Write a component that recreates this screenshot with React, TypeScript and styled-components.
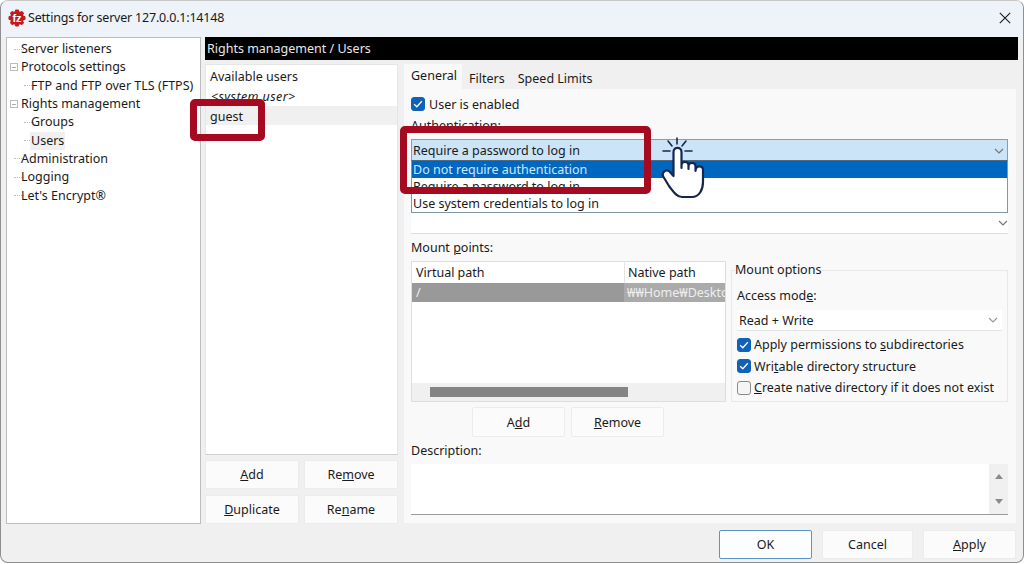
import React from "react";
import styled, { createGlobalStyle } from "styled-components";

const GlobalStyle = createGlobalStyle`
  html, body {
    margin: 0;
    padding: 0;
    background: #fff;
    overflow: hidden;
  }
  * {
    box-sizing: border-box;
  }
  u {
    text-underline-offset: 1px;
    text-decoration-thickness: 1px;
  }
`;

const treeItems = [
  { label: "Server listeners", level: 0 },
  { label: "Protocols settings", level: 0, expander: true },
  { label: "FTP and FTP over TLS (FTPS)", level: 1 },
  { label: "Rights management", level: 0, expander: true },
  { label: "Groups", level: 1 },
  { label: "Users", level: 1, selected: true },
  { label: "Administration", level: 0 },
  { label: "Logging", level: 0 },
  { label: "Let's Encrypt®", level: 0 },
];

const Chevron = ({ color = "#777" }: { color?: string }) => (
  <svg width="10" height="6" viewBox="0 0 10 6" fill="none">
    <path d="M1 1l4 4 4-4" stroke={color} strokeWidth="1.2" />
  </svg>
);

const Logo = () => (
  <svg width="18" height="18" viewBox="0 0 18 18">
    <g fill="#bf1d1d">
      <circle cx="9" cy="9" r="7" />
      <rect x="7" y="0.5" width="4" height="17" rx="1" />
      <rect x="0.5" y="7" width="17" height="4" rx="1" />
      <rect x="7" y="0.5" width="4" height="17" rx="1" transform="rotate(45 9 9)" />
      <rect x="7" y="0.5" width="4" height="17" rx="1" transform="rotate(-45 9 9)" />
    </g>
    <text x="9" y="13" textAnchor="middle" fontFamily="Liberation Sans, sans-serif" fontSize="11" fontWeight="700" fill="#fff">
      fz
    </text>
  </svg>
);

const Check = ({ on }: { on?: boolean }) => (
  <CheckBox $on={on}>
    {on && (
      <svg width="10" height="8" viewBox="0 0 10 8" fill="none">
        <path d="M1.2 4.2l2.6 2.5 5-5.4" stroke="#fff" strokeWidth="1.3" />
      </svg>
    )}
  </CheckBox>
);

const Hand = () => (
  <HandMark width="48" height="66" viewBox="660 135 48 66" fill="none">
    <g stroke="#16264f" strokeWidth="1.6" strokeLinecap="round">
      <path d="M677 138v6M668 141l4 5M686 141l-4 5M663 151h7M685 151h7" />
    </g>
    <path
      d="M673.5 176V152C673.5 146.5 681.5 146.5 681.5 152V168V165C681.5 161 688.5 161 688.5 165V169V166C688.5 162 695.5 162 695.5 166V171C695.5 165 703 165 703 170V182C703 190 699 197 692 197H682C676 197 673 191 669 186L663.5 177C661 173 666 168 670 172Z"
      fill="#fff"
      stroke="#16264f"
      strokeWidth="2.2"
      strokeLinejoin="round"
    />
  </HandMark>
);

export default function App() {
  return (
    <>
      <GlobalStyle />
      <Window>
        <TitleBar>
          <Logo />
          <TitleText>Settings for server 127.0.0.1:14148</TitleText>
          <CloseButton>
            <svg width="12" height="12" viewBox="0 0 12 12" fill="none">
              <path d="M.8.8l10.4 10.4M11.2.8L.8 11.2" stroke="#222" strokeWidth="1.2" />
            </svg>
          </CloseButton>
        </TitleBar>

        <Body>
          <Tree>
            {treeItems.map((item) => (
              <TreeRow key={item.label} $level={item.level}>
                {item.expander ? <Expander /> : <TreeDots $level={item.level} />}
                <TreeLabel $selected={item.selected}>{item.label}</TreeLabel>
              </TreeRow>
            ))}
          </Tree>

          <Pane>
            <PaneHeader>Rights management / Users</PaneHeader>
            <PaneColumns>
              <UsersColumn>
                <UsersList>
                  <UsersTitle>Available users</UsersTitle>
                  <UserRow $italic>&lt;system user&gt;</UserRow>
                  <UserRow $selected>guest</UserRow>
                </UsersList>
                <ButtonGrid>
                  <Button><span><u>A</u>dd</span></Button>
                  <Button><span>Re<u>m</u>ove</span></Button>
                  <Button><span><u>D</u>uplicate</span></Button>
                  <Button><span>Re<u>n</u>ame</span></Button>
                </ButtonGrid>
              </UsersColumn>

              <TabsColumn>
                <TabStrip>
                  <Tab $active>General</Tab>
                  <Tab>Filters</Tab>
                  <Tab>Speed Limits</Tab>
                </TabStrip>
                <TabPanel>
                  <EnabledRow>
                    <Check on />
                    User is enabled
                  </EnabledRow>
                  <FieldLabel>Authentication:</FieldLabel>

                  <AuthField>
                    <OpenCombo>
                      Require a password to log in
                      <Chevron />
                    </OpenCombo>
                    <Popup>
                      <PopupItem $selected>Do not require authentication</PopupItem>
                      <PopupItem>Require a password to log in</PopupItem>
                      <PopupItem>Use system credentials to log in</PopupItem>
                    </Popup>
                    <HiddenField>
                      <Chevron />
                    </HiddenField>
                  </AuthField>

                  <MountLabel>Mount <u>p</u>oints:</MountLabel>
                  <MountRow>
                    <MountList>
                      <MountHead>
                        <VirtualCell>Virtual path</VirtualCell>
                        <NativeCell>Native path</NativeCell>
                      </MountHead>
                      <MountItem>
                        <VirtualCell>/</VirtualCell>
                        <NativeValue>₩₩Home₩Desktop</NativeValue>
                      </MountItem>
                      <HScroll>
                        <HThumb />
                      </HScroll>
                    </MountList>

                    <OptionsGroup>
                      <OptionsLegend>Mount options</OptionsLegend>
                      <AccessLabel>Access mod<u>e</u>:</AccessLabel>
                      <AccessSelect>
                        Read + Write
                        <Chevron color="#999" />
                      </AccessSelect>
                      <OptionList>
                        <OptionRow><Check on /><span>Apply permissions to <u>s</u>ubdirectories</span></OptionRow>
                        <OptionRow><Check on /><span>Wri<u>t</u>able directory structure</span></OptionRow>
                        <OptionRow><Check /><span><u>C</u>reate native directory if it does not exist</span></OptionRow>
                      </OptionList>
                    </OptionsGroup>
                  </MountRow>

                  <MountButtons>
                    <MountButton><span>A<u>d</u>d</span></MountButton>
                    <MountButton><span><u>R</u>emove</span></MountButton>
                  </MountButtons>

                  <DescriptionLabel>Description:</DescriptionLabel>
                  <DescriptionBox>
                    <VScroll>
                      <ScrollArrow $up />
                      <ScrollArrow />
                    </VScroll>
                  </DescriptionBox>
                </TabPanel>
              </TabsColumn>
            </PaneColumns>
          </Pane>
        </Body>

        <Footer>
          <DefaultButton>OK</DefaultButton>
          <CancelButton>Cancel</CancelButton>
          <Button><span><u>A</u>pply</span></Button>
        </Footer>

        <GuestCallout />
        <AuthCallout />
        <Hand />
      </Window>
    </>
  );
}

const Window = styled.div`
  position: relative;
  width: 1024px;
  height: 563px;
  display: flex;
  flex-direction: column;
  overflow: hidden;
  background: #f0f0f0;
  border: 1px solid #8f8f8f;
  border-top-color: #c8c8c8;
  border-radius: 8px;
  color: #1a1a1a;
  font-family: "Noto Sans", "Open Sans", sans-serif;
  font-size: 12.5px;
`;

const TitleBar = styled.div`
  height: 36px;
  flex: none;
  display: flex;
  align-items: center;
  padding: 0 12px 3px 7px;
  background: #eef3f9;
`;

const TitleText = styled.span`
  margin-left: 2px;
  letter-spacing: -0.2px;
`;

const CloseButton = styled.div`
  margin-left: auto;
  display: flex;
`;

const Body = styled.div`
  height: 488px;
  flex: none;
  display: flex;
  gap: 4px;
  padding-left: 5px;
`;

const Tree = styled.div`
  width: 195px;
  height: 487px;
  padding-top: 2px;
  background: #fff;
  border: 1px solid #bdbdbd;
`;

const TreeRow = styled.div<{ $level: number }>`
  height: 18.3px;
  display: flex;
  align-items: center;
  padding-left: ${(p) => (p.$level ? 13 : 3)}px;
`;

const Expander = styled.span`
  width: 8px;
  height: 8px;
  flex: none;
  margin-right: 2px;
  background: linear-gradient(#aaa, #aaa) center / 4px 1px no-repeat, #fff;
  border: 1px solid #bbb;
`;

const TreeDots = styled.span<{ $level: number }>`
  width: 10px;
  flex: none;
  margin-left: 4px;
  margin-right: -4px;
  border-top: 1px dotted #bbb;
`;

const TreeLabel = styled.span<{ $selected?: boolean }>`
  padding: 0 1px;
  line-height: 18px;
  white-space: nowrap;
  background: ${(p) => (p.$selected ? "#f0f0f0" : "transparent")};
`;

const Pane = styled.div`
  width: 813px;
  flex: none;
`;

const PaneHeader = styled.div`
  height: 23px;
  padding-left: 2px;
  line-height: 23px;
  background: #000;
  color: #e8e8e8;
`;

const PaneColumns = styled.div`
  margin-top: 4px;
  display: flex;
  gap: 6px;
`;

const UsersColumn = styled.div`
  width: 193px;
  flex: none;
`;

const UsersList = styled.div`
  height: 391px;
  background: #fff;
  border: 1px solid #e6e6e6;
  border-bottom-color: #cfcfcf;
`;

const UsersTitle = styled.div`
  height: 22px;
  padding: 2px 0 0 4px;
  line-height: 19px;
`;

const UserRow = styled.div<{ $italic?: boolean; $selected?: boolean }>`
  height: 19px;
  padding-left: ${(p) => (p.$italic ? 5 : 4)}px;
  line-height: ${(p) => (p.$selected ? 21 : 19)}px;
  font-style: ${(p) => (p.$italic ? "italic" : "normal")};
  letter-spacing: ${(p) => (p.$italic ? "0.4px" : "normal")};
  background: ${(p) => (p.$selected ? "#f0f0f0" : "transparent")};
`;

const Button = styled.div`
  width: 93px;
  height: 29px;
  display: flex;
  align-items: center;
  justify-content: center;
  background: #fbfbfb;
  border: 1px solid #ececec;
  border-radius: 2px;
`;

const ButtonGrid = styled.div`
  margin-top: 5px;
  display: grid;
  grid-template-columns: 94px 94px;
  column-gap: 5px;
  row-gap: 6px;

  ${Button} {
    width: 94px;
  }
`;

const TabsColumn = styled.div`
  width: 612px;
  flex: none;
`;

const TabStrip = styled.div`
  height: 25px;
  display: flex;
`;

const Tab = styled.div<{ $active?: boolean }>`
  height: 25px;
  padding: ${(p) => (p.$active ? "3px 5px 0 7px" : "6px 6px 0 7px")};
  line-height: 18px;
  background: ${(p) => (p.$active ? "#f9f9f9" : "transparent")};
`;

const TabPanel = styled.div`
  height: 434px;
  padding: 8px 8px 0 7px;
  background: #f9f9f9;
`;

const EnabledRow = styled.div`
  height: 14px;
  display: flex;
  align-items: center;
  gap: 4px;
`;

const CheckBox = styled.span<{ $on?: boolean }>`
  width: 14px;
  height: 14px;
  flex: none;
  display: flex;
  align-items: center;
  justify-content: center;
  border-radius: 3px;
  background: ${(p) => (p.$on ? "#0f62b8" : "#f5f5f5")};
  border: 1px solid ${(p) => (p.$on ? "#0f62b8" : "#8a8a8a")};
`;

const FieldLabel = styled.div`
  height: 16px;
  margin-top: 7px;
  line-height: 16px;
`;

const AuthField = styled.div`
  position: relative;
  margin-top: 5px;
`;

const OpenCombo = styled.div`
  height: 22px;
  padding: 0 3px 0 1px;
  display: flex;
  align-items: center;
  justify-content: space-between;
  background: #cce4f7;
  border: 1px solid #8d9ba8;
  border-bottom: none;
`;

const Popup = styled.div`
  position: absolute;
  z-index: 1;
  top: 21px;
  left: 0;
  right: 0;
  height: 53px;
  background: #fff;
  border: 1px solid #7f97a8;
  border-top-color: #4a6a85;
`;

const PopupItem = styled.div<{ $selected?: boolean }>`
  height: 17px;
  padding-left: 1px;
  line-height: 17px;
  background: ${(p) => (p.$selected ? "#0067c0" : "transparent")};
  color: ${(p) => (p.$selected ? "#cfe6fa" : "#1a1a1a")};
`;

const HiddenField = styled.div`
  height: 21px;
  margin-top: 52px;
  display: flex;
  align-items: center;
  justify-content: flex-end;
  background: #fff;
  border-bottom: 1px solid #dcdcdc;
`;

const MountLabel = styled.div`
  height: 16px;
  margin-top: 6px;
  line-height: 16px;
`;

const MountRow = styled.div`
  height: 141px;
  margin-top: 5px;
  display: flex;
  gap: 5px;
`;

const MountList = styled.div`
  width: 315px;
  height: 141px;
  flex: none;
  display: flex;
  flex-direction: column;
  background: #fff;
  border: 1px solid #dedede;
`;

const MountHead = styled.div`
  height: 21px;
  display: flex;
  line-height: 22px;
`;

const MountItem = styled.div`
  height: 19px;
  display: flex;
  line-height: 20px;
  background: #999;
  color: #eee;
`;

const VirtualCell = styled.div`
  width: 212px;
  flex: none;
  padding-left: 4px;
`;

const NativeCell = styled.div`
  flex: 1;
  padding-left: 3px;
  border-left: 1px solid #e4e4e4;
`;

const NativeValue = styled.div`
  flex: 1;
  overflow: hidden;
  padding-left: 3px;
  white-space: nowrap;
  background: #aaa;
`;

const HScroll = styled.div`
  height: 18px;
  margin-top: auto;
  padding: 4px 0 0 18px;
  background: #f0f0f0;
`;

const HThumb = styled.div`
  width: 198px;
  height: 10px;
  background: #858585;
`;

const OptionsGroup = styled.fieldset`
  width: 277px;
  height: 141px;
  flex: none;
  margin: 0;
  padding: 0 5px;
  border: 1px solid #e8e8e8;
`;

const OptionsLegend = styled.legend`
  height: 18px;
  margin-left: -2px;
  padding: 0;
  line-height: 18px;
`;

const AccessLabel = styled.div`
  height: 16px;
  margin-top: 9px;
  line-height: 16px;
`;

const AccessSelect = styled.div`
  height: 21px;
  margin-top: 6px;
  padding: 0 4px 0 2px;
  display: flex;
  align-items: center;
  justify-content: space-between;
  background: #fff;
  border-bottom: 1px solid #e4e4e4;
`;

const OptionList = styled.div`
  margin-top: 3px;
`;

const OptionRow = styled.div`
  height: 21.6px;
  display: flex;
  align-items: center;
  gap: 3px;
  white-space: pre;
`;

const MountButtons = styled.div`
  margin: 5px 0 0 61px;
  display: flex;
  gap: 6px;
`;

const MountButton = styled(Button)`
  height: 30px;
`;

const DescriptionLabel = styled.div`
  height: 16px;
  margin-top: 6px;
  line-height: 16px;
`;

const DescriptionBox = styled.div`
  height: 51px;
  margin-top: 5px;
  display: flex;
  justify-content: flex-end;
  background: #fff;
  border-bottom: 1px solid #9a9a9a;
`;

const VScroll = styled.div`
  width: 19px;
  display: flex;
  flex-direction: column;
  justify-content: space-between;
  align-items: center;
  padding: 10px 0;
  background: #f0f0f0;
`;

const ScrollArrow = styled.span<{ $up?: boolean }>`
  width: 0;
  height: 0;
  border-left: 4px solid transparent;
  border-right: 4px solid transparent;
  ${(p) => (p.$up ? "border-bottom" : "border-top")}: 5px solid #8a8a8a;
`;

const Footer = styled.div`
  margin-top: 5px;
  padding-right: 7px;
  display: flex;
  justify-content: flex-end;
  gap: 10px;
`;

const DefaultButton = styled(Button)`
  border-color: #5a94c8;
  background: #fcfdfe;
`;

const CancelButton = styled(Button)`
  width: 91px;
`;

const Callout = styled.div`
  position: absolute;
  z-index: 2;
  border: 7px solid #a60a20;
  border-radius: 5px;
`;

const GuestCallout = styled(Callout)`
  left: 189px;
  top: 98px;
  width: 75px;
  height: 42px;
`;

const AuthCallout = styled(Callout)`
  left: 399px;
  top: 125px;
  width: 251px;
  height: 68px;
`;

const HandMark = styled.svg`
  position: absolute;
  z-index: 3;
  left: 659px;
  top: 134px;
`;
